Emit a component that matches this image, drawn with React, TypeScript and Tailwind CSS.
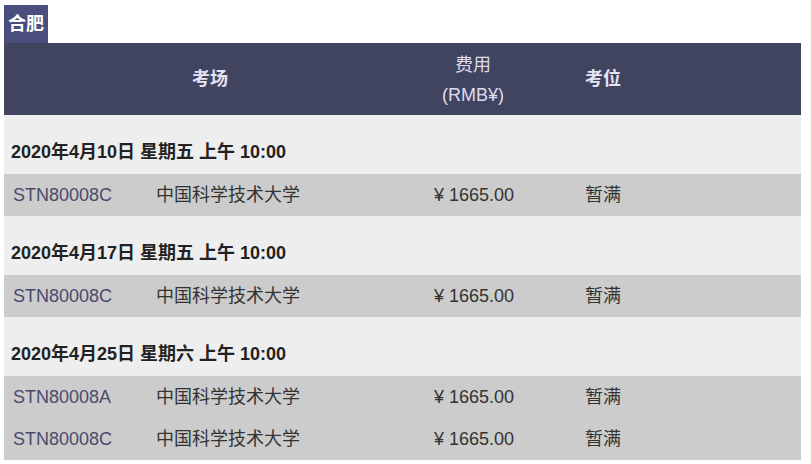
import React from 'react';

type Seat = { code: string; venue: string; fee: string; status: string };
type Session = { date: string; seats: Seat[] };

const sessions: Session[] = [
  { date: '2020年4月10日 星期五 上午 10:00', seats: [{ code: 'STN80008C', venue: '中国科学技术大学', fee: '1665.00', status: '暂满' }] },
  { date: '2020年4月17日 星期五 上午 10:00', seats: [{ code: 'STN80008C', venue: '中国科学技术大学', fee: '1665.00', status: '暂满' }] },
  {
    date: '2020年4月25日 星期六 上午 10:00',
    seats: [
      { code: 'STN80008A', venue: '中国科学技术大学', fee: '1665.00', status: '暂满' },
      { code: 'STN80008C', venue: '中国科学技术大学', fee: '1665.00', status: '暂满' },
    ],
  },
];

const font = { fontFamily: '"Liberation Sans", Arial, "Noto Sans CJK SC", sans-serif' };

const App: React.FC = () => {
  return (
    <div className="bg-white w-[811px] h-[464px] pt-[5px] pl-[4px]" style={font}>
      <div className="w-[44px] h-[38px] bg-[#4b4e7c] text-white font-bold text-[18px] flex items-center justify-center">
        合肥
      </div>
      <div className="w-[797px]">
        {/* header */}
        <div className="h-[72px] bg-[#41445f] flex items-center text-[#e4e4f6]">
          <div className="w-[412px] text-center font-bold text-[18px]">考场</div>
          <div className="w-[114px] text-center text-[18px] leading-[30px] text-[#dcdcee] pt-[2px]">
            <div>费用</div>
            <div>(RMB¥)</div>
          </div>
          <div className="pl-[55px] font-bold text-[18px]">考位</div>
        </div>

        {sessions.map((s, i) => (
          <div key={i}>
            <div className="h-[59px] bg-[#eeeeee] flex items-end pb-[8px] pl-[7px] font-bold text-[18px] text-[#222]">
              {s.date}
            </div>
            {s.seats.map((seat, j) => (
              <div key={j} className="h-[42px] bg-[#cccccc] flex items-center text-[18px] text-[#333]">
                <div className="w-[152px] pl-[9px] text-[#4a4a6c]">{seat.code}</div>
                <div className="w-[269px]">{seat.venue}</div>
                <div className="w-[160px] pl-[9px]">¥<span className="ml-[5px]">{seat.fee}</span></div>
                <div>{seat.status}</div>
              </div>
            ))}
          </div>
        ))}
      </div>
    </div>
  );
};

export default App;
